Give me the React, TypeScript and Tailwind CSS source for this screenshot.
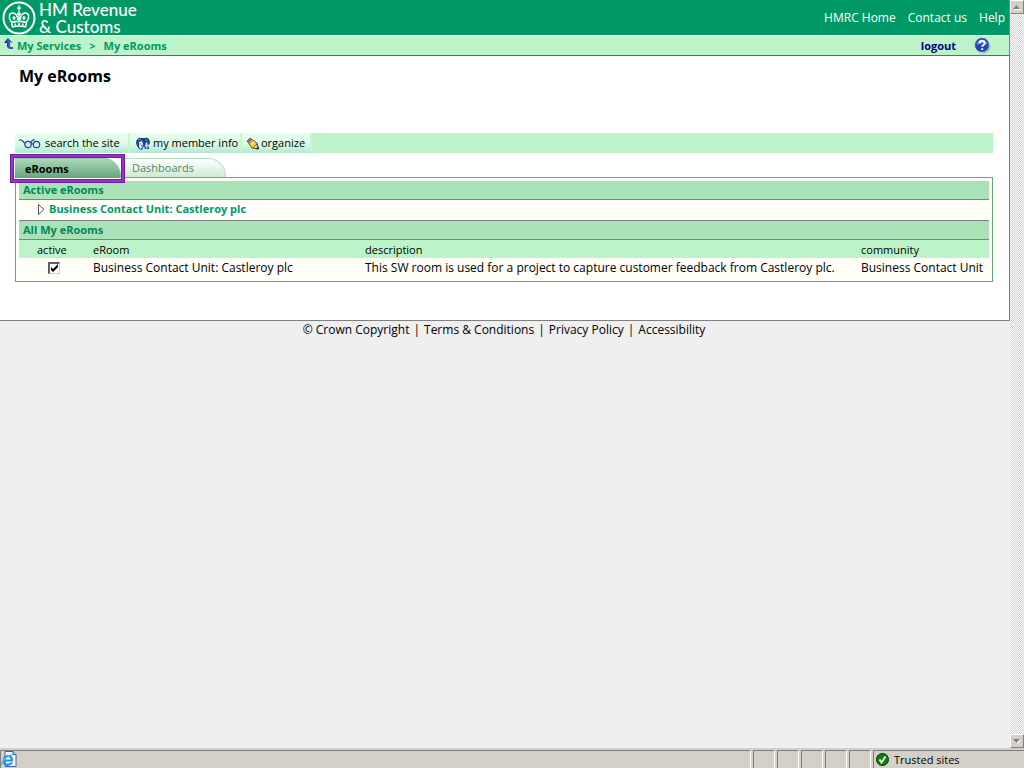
import { useState } from 'react';

const rooms = [
  {
    name: 'Business Contact Unit: Castleroy plc',
    description: 'This SW room is used for a project to capture customer feedback from Castleroy plc.',
    community: 'Business Contact Unit',
  },
];

function CrownLogo() {
  return (
    <svg width="34" height="34" viewBox="0 0 34 34" fill="none" stroke="#fff">
      <circle cx="17" cy="17" r="15.5" strokeWidth="2" />
      <path d="M17 4.500v5M15 7h4" strokeWidth="1.600" />
      <path d="M9.500 21C6 17 7 12 10.500 12c3 0 5 3 5.500 7M24.500 21c3.500-4 2.500-9-1-9-3 0-5 3-5.500 7" strokeWidth="1.500" />
      <path d="M17 10v10M12 15v4M22 15v4M10.500 17h3M20.500 17h3M15 13h4" strokeWidth="1.400" />
      <path d="M9.500 21.500c5-1.500 10-1.500 15 0M10 26c5-1.500 9-1.500 14 0M9.500 21l1 5M24.500 21l-1 5" strokeWidth="1.500" />
      <path d="M12.500 23.500H14M16 23.200h2M20 23.500h1.500" strokeWidth="1.800" />
    </svg>
  );
}

function UpIcon() {
  return (
    <svg className="mb-1" width="9" height="12" viewBox="0 0 9 12">
      <path d="M0 4.500 4 0l4.500 4.500H6V8c0 1 1 1 3 1v2C5 11 3 10.500 3 8V4.500z" fill="#3159c9" />
      <path d="M4 1 1 4.500h2.500V8" fill="none" stroke="#19328c" />
    </svg>
  );
}

function HelpIcon() {
  return (
    <svg width="17" height="17" viewBox="0 0 17 17">
      <circle cx="9" cy="9" r="7.500" fill="#9aa7b5" />
      <circle cx="8" cy="8" r="7.500" fill="#2348ad" stroke="#c3d4f1" />
      <path d="M2.500 8a5.500 5.500 0 0 1 11 0c-3-2-7-2-11 0z" fill="#5b86dd" />
      <path d="M5.500 6.300c0-3.300 5.200-3.300 5.200 0C10.700 8 8.200 8 8.200 9.800M8.200 11.200v1.900" fill="none" stroke="#fff" strokeWidth="1.900" />
    </svg>
  );
}

function GlassesIcon() {
  return (
    <svg className="shrink-0" width="22" height="13" viewBox="0 0 22 13" fill="none" stroke="#1f4a93" strokeWidth="1.200">
      <path d="M0 3.500c1.500-1.500 2.500-.5 3.500.5l3 3M12 6.500c.5-3 2-4.500 3.500-3" />
      <circle cx="9" cy="7.500" r="3.200" fill="#d5ecff" />
      <circle cx="17.500" cy="7.500" r="3.200" fill="#d5ecff" />
      <path d="M12 7.500c.8-1 1.700-1 2.500 0" />
    </svg>
  );
}

function MembersIcon() {
  return (
    <svg className="shrink-0" width="15" height="13" viewBox="0 0 15 13">
      <path d="M0 6C0 2 3 0 6 1l3 0c3-1 5 1 5 5l-1 2v4H9L8 9l-2 4-3-1-2-3z" fill="#1c4285" />
      <path d="M3 5l3-1 1 3-1 4-2 1-1-3z" fill="#e3f1ff" />
      <path d="M10 5l2 1 1 3-2 3-2-3z" fill="#c5ddf7" />
      <path d="M4 7h1M11 7h1M5 9h1M11 10h1" stroke="#14305f" />
      <path d="M2 3l3-1M9 3l3 0" stroke="#6b93c9" />
    </svg>
  );
}

function PencilIcon() {
  return (
    <svg className="shrink-0" width="13" height="13" viewBox="0 0 13 13">
      <path d="M1 4 4 1l7 5 1.500 6L6 11z" fill="#e6d72e" stroke="#4d4a28" strokeWidth="0.900" />
      <path d="M1 4 4 1l2 2-3 3z" fill="#ae637b" />
      <path d="M3 6l3-3 1 1-3 3z" fill="#a9aaa2" />
      <path d="M5 7.500 8.500 5" stroke="#fff59a" />
      <path d="M7 11l4-4 1 5z" fill="#ead4aa" stroke="#493b22" strokeWidth="0.700" />
      <path d="M10 12h2.500V9.500z" fill="#191919" />
    </svg>
  );
}

function BrowserIcon() {
  return (
    <svg width="16" height="16" viewBox="0 0 16 16">
      <path d="M4 .5h8l3 3v12H4z" fill="#f3f8ff" stroke="#4a60a3" />
      <path d="M12 .5v3h3" fill="#b9c8ed" stroke="#4a60a3" />
      <path d="M3 9.500h8c0-6-8-6-8 0s6 5 8 2" fill="none" stroke="#238fdb" strokeWidth="2.200" />
      <path d="M1 14c-2-3 7-11 11-10" fill="none" stroke="#56b9ef" strokeWidth="1.400" />
    </svg>
  );
}

function TrustedIcon() {
  return (
    <svg width="13" height="13" viewBox="0 0 13 13">
      <circle cx="6.500" cy="6.500" r="6" fill="#078407" stroke="#032d03" />
      <path d="M3.500 6.500 5.500 9.500 9.500 3.500" fill="none" stroke="#fff" strokeWidth="1.800" />
    </svg>
  );
}

function ScrollButton({ down }: { down?: boolean }) {
  return (
    <button
      aria-label={down ? 'Scroll down' : 'Scroll up'}
      className="flex h-3.5 shrink-0 items-center justify-center border-t border-r border-b border-l border-[#808080] border-t-white border-l-white bg-[#d4d0c8]"
    >
      <svg width="8" height="5" viewBox="0 0 8 5">
        <path d={down ? 'M1 1h7L4.500 5z' : 'M1 5h7L4.500 1z'} fill="#fff" />
        <path d={down ? 'M0 0h7L3.500 4z' : 'M0 4h7L3.500 0z'} fill="#808080" />
      </svg>
    </button>
  );
}

const toolButton =
  'flex h-5 items-center border-r-2 border-[#c8f6d2] bg-linear-to-b from-[#e6ffee] via-[#dffbe8] to-[#b4e8d1] text-[11px] whitespace-nowrap';

export default function App() {
  const [active, setActive] = useState(true);

  return (
    <div className="flex h-screen flex-col overflow-hidden bg-[#efefef] font-['Open_Sans',sans-serif] text-[11px] leading-4 text-black">
      <div className="flex min-h-0 flex-1">
        <div className="min-w-0 flex-1">
          <div className="border-r border-b border-[#808080] bg-white pb-[38px]">
            {/* Banner */}
            <header className="flex h-[35px] items-center justify-between bg-[#009966] pr-1 pl-0.5 text-white">
              <div className="flex items-center gap-[3px]">
                <CrownLogo />
                <div className="font-['Lato',sans-serif] text-[17px] leading-[17px] font-medium">
                  <div>HM Revenue</div>
                  <div>&amp; Customs</div>
                </div>
              </div>
              <nav className="flex gap-3 text-xs">
                <a href="#">HMRC Home</a>
                <a href="#">Contact us</a>
                <a href="#">Help</a>
              </nav>
            </header>

            {/* Breadcrumb */}
            <div className="flex h-[21px] items-center justify-between border-t border-b border-t-[#e6fff0] border-b-[#009966] bg-[#bdf3c8] pr-[18px] pl-1 font-bold text-[#009966]">
              <nav className="flex items-center">
                <UpIcon />
                <a href="#" className="ml-1">My Services</a>
                <span className="mx-2">&gt;</span>
                <a href="#">My eRooms</a>
              </nav>
              <div className="flex items-center gap-[18px]">
                <a href="#" className="text-[#000080]">logout</a>
                <button aria-label="Help">
                  <HelpIcon />
                </button>
              </div>
            </div>

            <main className="pr-4 pl-[15px]">
              <h1 className="mt-2 mb-[45px] pl-1 text-base leading-6 font-bold">My eRooms</h1>

              {/* Toolbar */}
              <div className="flex h-5 bg-[#bdf3c8]">
                <button className={`${toolButton} w-[115px] gap-1 pl-1`}>
                  <GlassesIcon />
                  search the site
                </button>
                <button className={`${toolButton} w-28 gap-0.5 pl-1.5`}>
                  <MembersIcon />
                  my member info
                </button>
                <button className={`${toolButton} w-[70px] gap-0.5 pl-1`}>
                  <PencilIcon />
                  organize
                </button>
              </div>

              {/* Tabs */}
              <div className="-ml-[5px] flex h-6 items-end">
                <div className="z-10 -mb-[6px] h-[29px] w-[115px] shrink-0 border border-[#6b1f9c] bg-[#9933cc] p-0.5">
                  <div className="h-full border border-[#6b1f9c] bg-white pl-px">
                    <button className="block h-5 w-[106px] rounded-tr-[18px] border-t border-r border-[#91c5a2] bg-linear-to-b from-[#acd8b9] to-[#65a57a] pl-2.5 text-left font-bold">
                      eRooms
                    </button>
                  </div>
                </div>
                <button className="h-[19px] w-[101px] rounded-tr-[18px] border-t border-r border-[#b9dfc6] bg-linear-to-b from-white to-[#cdebd6] pl-[7px] text-left text-[#558466]">
                  Dashboards
                </button>
              </div>

              <div className="border border-[#65a57a] bg-[#fffef8] px-[3px] pt-[3px] pb-1">
                <h2 className="h-[19px] border-b border-[#808080] bg-[#a9e2b7] pl-1 leading-[18px] font-bold text-[#008857]">
                  Active eRooms
                </h2>
                <div className="flex h-5 items-center pb-0.5 pl-[19px]">
                  <svg width="7" height="11" viewBox="0 0 7 11">
                    <path d="M.5.500v10L6 5.500z" fill="#fff" stroke="#555" />
                  </svg>
                  <a href="#" className="ml-1 font-bold text-[#009966]">
                    {rooms[0].name}
                  </a>
                </div>
                <h2 className="h-5 border-t border-b border-[#808080] bg-[#a9e2b7] pl-1 leading-[18px] font-bold text-[#008857]">
                  All My eRooms
                </h2>
                <table className="w-full table-fixed text-left">
                  <thead>
                    <tr className="h-[18px] bg-[#bdf3c8]">
                      <th id="active" className="w-[74px] pt-0.5 pl-[18px] font-normal">active</th>
                      <th className="w-[272px] pt-0.5 font-normal">eRoom</th>
                      <th className="w-[496px] pt-0.5 font-normal">description</th>
                      <th className="pt-0.5 font-normal">community</th>
                    </tr>
                  </thead>
                  <tbody>
                    {rooms.map((room) => (
                      <tr key={room.name} className="h-[19px] text-xs">
                        <td className="pl-[29px]">
                          <div className="grid size-3">
                            <input
                              type="checkbox"
                              aria-labelledby="active room"
                              checked={active}
                              onChange={() => setActive(!active)}
                              className="peer col-start-1 row-start-1 size-3 appearance-none border-t-2 border-r border-b border-l-2 border-[#606060] border-r-[#d4d0c8] border-b-[#d4d0c8] bg-white"
                            />
                            <svg
                              viewBox="0 0 12 12"
                              className="pointer-events-none invisible col-start-1 row-start-1 size-3 peer-checked:visible"
                            >
                              <path d="M3 5v3l2 2 5-5V2L5 7z" fill="#000" />
                            </svg>
                          </div>
                        </td>
                        <td id="room">{room.name}</td>
                        <td className="whitespace-nowrap">{room.description}</td>
                        <td className="whitespace-nowrap">{room.community}</td>
                      </tr>
                    ))}
                  </tbody>
                </table>
              </div>
            </main>
          </div>

          <footer className="flex justify-center gap-1 pt-px pr-0.5 text-xs">
            <span>© Crown Copyright</span>
            <span>|</span>
            <a href="#">Terms &amp; Conditions</a>
            <span>|</span>
            <a href="#">Privacy Policy</a>
            <span>|</span>
            <a href="#">Accessibility</a>
          </footer>
        </div>

        {/* Scrollbar */}
        <div className="flex w-3.5 shrink-0 flex-col justify-between bg-[repeating-conic-gradient(#d4d0c8_0_25%,#fff_0_50%)] bg-size-[2px_2px]">
          <ScrollButton />
          <ScrollButton down />
        </div>
      </div>

      {/* Status bar */}
      <div className="flex h-5 shrink-0 gap-0.5 bg-[#d4d0c8] pt-0.5">
        <div className="flex-1 border-t border-r border-l border-[#808080] border-r-white">
          <BrowserIcon />
        </div>
        {[1, 2, 3, 4, 5].map((n) => (
          <div key={n} className="w-[22px] border-t border-r border-l border-[#808080] border-r-white" />
        ))}
        <div className="flex w-[151px] items-center gap-[5px] border-t border-l border-[#808080] pl-0.5">
          <TrustedIcon />
          Trusted sites
        </div>
      </div>
    </div>
  );
}
